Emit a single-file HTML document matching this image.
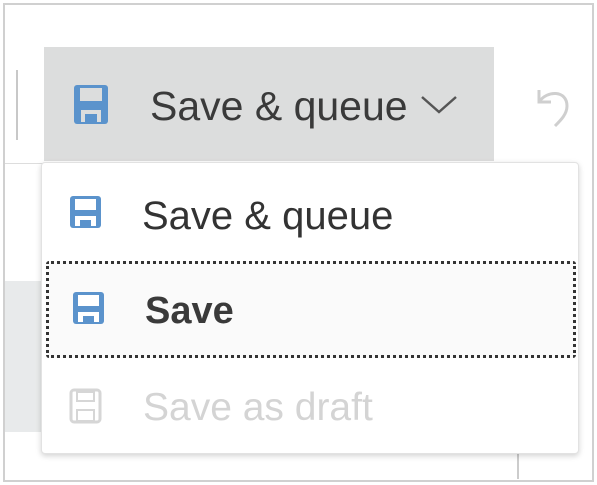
<!DOCTYPE html>
<html><head><style>
body{margin:0;width:597px;height:485px;background:#fff;position:relative;overflow:hidden;font-family:"Liberation Sans",sans-serif}
.a{position:absolute}
.t{position:absolute;white-space:nowrap;color:#333;font-size:40px;line-height:1}
</style></head><body>
<div class="a" style="left:3px;top:3px;width:587px;height:475px;border:2px solid #d0d0d0"></div>
<div class="a" style="left:5px;top:163px;width:40px;height:1px;background:#ddd"></div>
<div class="a" style="left:5px;top:281px;width:36px;height:151px;background:#e8eaeb"></div>
<div class="a" style="left:517px;top:450px;width:2px;height:29px;background:#ccc"></div>
<div class="a" style="left:16px;top:70px;width:2px;height:70px;background:#c8c8c8"></div>
<div class="a" style="left:44px;top:47px;width:450px;height:114px;background:#dcdddd"></div>
<svg class="a" style="left:73px;top:84px" width="36" height="41" viewBox="0 0 36 41"><rect x="1" y="1" width="34" height="39" rx="3" fill="#5b93cc"/><rect x="7" y="4" width="22" height="13" fill="#dcdddd"/><rect x="8" y="26" width="20" height="12" fill="#dcdddd"/><rect x="12" y="30" width="12" height="8" fill="#5b93cc"/></svg>
<div class="t" style="left:150px;top:86px;font-size:41px;color:#3a3a3a">Save &amp; queue</div>
<svg class="a" style="left:420px;top:95px" width="38" height="20"><path d="M2 2 L19 17 L36 2" fill="none" stroke="#555" stroke-width="2.5"/></svg>
<svg class="a" style="left:533px;top:80px" width="38" height="50"><path d="M6 10 L6 22 L18 22 M6 22 C14 10 34 10 34 26 C34 34 28 40 22 46" fill="none" stroke="#cfcfcf" stroke-width="3"/></svg>
<div class="a" style="left:41px;top:162px;width:536px;height:290px;background:#fff;border:1px solid #e2e2e2;border-radius:4px;box-shadow:0 2px 6px rgba(0,0,0,.18)"></div>
<svg class="a" style="left:69px;top:195px" width="33" height="34" viewBox="0 0 33 34"><rect x="1" y="1" width="31" height="32" rx="3" fill="#5b93cc"/><rect x="6" y="4" width="21" height="11" fill="#fff"/><rect x="6" y="21" width="21" height="10" fill="#fff"/><rect x="11" y="25" width="11" height="6" fill="#5b93cc"/></svg>
<div class="t" style="left:142px;top:196px">Save &amp; queue</div>
<div class="a" style="left:46px;top:261px;width:524px;height:91px;border:3px dotted #333;background:#fafafa;border-radius:3px"></div>
<svg class="a" style="left:72px;top:291px" width="33" height="34" viewBox="0 0 33 34"><rect x="1" y="1" width="31" height="32" rx="3" fill="#5b93cc"/><rect x="6" y="4" width="21" height="11" fill="#fff"/><rect x="6" y="21" width="21" height="10" fill="#fff"/><rect x="11" y="25" width="11" height="6" fill="#5b93cc"/></svg>
<div class="t" style="left:145px;top:292px;font-weight:bold;color:#3a3a3a;font-size:38px">Save</div>
<svg class="a" style="left:69px;top:388px" width="33" height="36" viewBox="0 0 33 36"><rect x="2" y="2" width="29" height="32" rx="3" fill="none" stroke="#d6d6d6" stroke-width="3"/><rect x="8" y="4" width="17" height="9" fill="none" stroke="#d6d6d6" stroke-width="2"/><rect x="8" y="22" width="17" height="11" fill="none" stroke="#d6d6d6" stroke-width="2"/></svg>
<div class="t" style="left:143px;top:388px;color:#d4d4d4;font-size:39px">Save as draft</div>
</body></html>
